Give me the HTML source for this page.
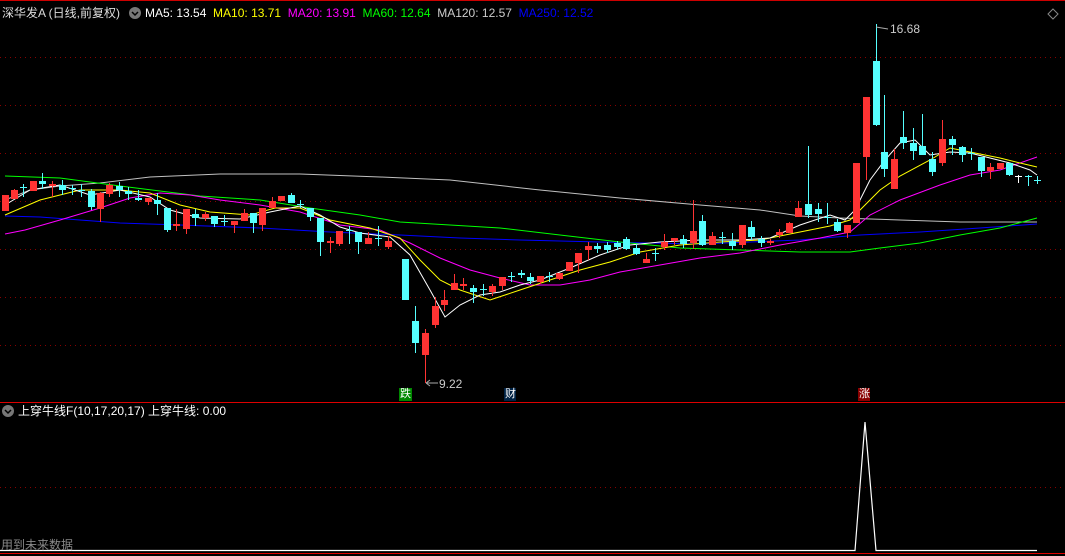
<!DOCTYPE html>
<html><head><meta charset="utf-8"><style>
body{margin:0;background:#000;width:1065px;height:556px;overflow:hidden;font-family:"Liberation Sans","Noto Sans CJK SC",sans-serif;}
svg{position:absolute;left:0;top:0}
.t{position:absolute;font-size:12px;white-space:nowrap;line-height:14px}
</style></head><body>
<svg id="s" width="1065" height="556" xmlns="http://www.w3.org/2000/svg">
<line x1="0" y1="0.5" x2="1065" y2="0.5" stroke="#c00"/>
<g stroke="#800" stroke-dasharray="1,4">
<line x1="0" y1="57.5" x2="1065" y2="57.5"/><line x1="0" y1="105.5" x2="1065" y2="105.5"/>
<line x1="0" y1="153.5" x2="1065" y2="153.5"/><line x1="0" y1="201.5" x2="1065" y2="201.5"/>
<line x1="0" y1="249.5" x2="1065" y2="249.5"/><line x1="0" y1="297.5" x2="1065" y2="297.5"/>
<line x1="0" y1="345.5" x2="1065" y2="345.5"/><line x1="0" y1="487.5" x2="1065" y2="487.5"/>
</g>
<line x1="0" y1="402.5" x2="1065" y2="402.5" stroke="#d00"/>
<line x1="0" y1="553.5" x2="1065" y2="553.5" stroke="#d00"/>
<polyline points="0,550.5 855,550.5 865,422 876,550.5 1037,550.5" fill="none" stroke="#fff" stroke-width="1.2"/>
<g id="ma" fill="none" stroke-width="1"></g>
<g id="c"></g>
<line x1="876.5" y1="24" x2="876.5" y2="61" stroke="#5ff"/>
<path d="M876 27 L888 29" stroke="#aaa"/>
<line x1="425.5" y1="355" x2="425.5" y2="383" stroke="#f33"/>
<path d="M426 383 L438 383 M426 383 L430 380 M426 383 L430 386" stroke="#aaa" fill="none"/>
<rect x="399" y="388" width="13" height="13" fill="#080"/>
<rect x="504" y="388" width="12" height="13" fill="#024"/>
<rect x="858" y="388" width="12" height="13" fill="#800"/>
<path d="M1053 9 L1058 14 L1053 19 L1048 14 Z" fill="none" stroke="#888"/>
<circle cx="135" cy="13" r="6" fill="#777"/><path d="M132 12 L135 15 L138 12" stroke="#000" fill="none" stroke-width="1.5"/>
<circle cx="8" cy="411" r="6" fill="#777"/><path d="M5 410 L8 413 L11 410" stroke="#000" fill="none" stroke-width="1.5"/>
</svg>
<div class="t" style="left:2px;top:6px;color:#ddd">深华发A (日线,前复权)</div>
<div class="t" style="left:145px;top:6px"><span style="color:#fff">MA5: 13.54</span>&nbsp; <span style="color:#ff0">MA10: 13.71</span>&nbsp; <span style="color:#f0f">MA20: 13.91</span>&nbsp; <span style="color:#0f0">MA60: 12.64</span>&nbsp; <span style="color:#ccc">MA120: 12.57</span>&nbsp; <span style="color:#00f">MA250: 12.52</span></div>
<div class="t" style="left:890px;top:22px;color:#ccc">16.68</div>
<div class="t" style="left:439px;top:377px;color:#ccc">9.22</div>
<div class="t" style="left:400px;top:387px;color:#fff;font-size:11px">跌</div>
<div class="t" style="left:505px;top:387px;color:#fff;font-size:11px">财</div>
<div class="t" style="left:859px;top:387px;color:#fff;font-size:11px">涨</div>
<div class="t" style="left:18px;top:404px;color:#fff">上穿牛线F(10,17,20,17) 上穿牛线: 0.00</div>
<div class="t" style="left:1px;top:538px;color:#888">用到未来数据</div>
<script>
var C=[[5,'r',195,211,195,211],[14,'r',190,199,189,199],[23,'x',187,187,184,197],[33,'r',181,191,181,191],[42,'c',181,184,173,189],[52,'r',184,186,181,197],[62,'c',185,190,180,195],[72,'x',188,188,185,195],[81,'x',190,190,184,197],[91,'c',191,207,189,210],[100,'r',193,209,192,222],[109,'r',185,194,183,197],[119,'c',186,190,182,197],[128,'c',191,194,187,200],[138,'c',198,200,190,201],[148,'r',198,202,198,205],[157,'c',200,204,193,215],[167,'c',208,230,208,232],[176,'r',224,226,209,231],[186,'r',209,229,209,234],[195,'c',214,218,209,226],[205,'r',214,218,212,221],[214,'c',216,224,216,227],[224,'x',221,221,215,226],[234,'r',221,225,221,233],[244,'r',213,221,209,221],[253,'c',213,223,213,233],[262,'r',208,225,208,231],[272,'r',201,208,197,208],[281,'r',196,201,196,201],[291,'c',195,203,193,203],[300,'x',204,204,200,208],[310,'c',208,217,208,221],[320,'c',218,242,218,256],[330,'r',241,243,237,253],[339,'r',231,244,231,246],[349,'x',230,230,226,244],[358,'c',232,242,232,254],[368,'r',238,244,232,244],[378,'x',238,238,226,246],[388,'r',241,247,236,249],[405,'c',259,300,259,300],[415,'c',321,343,306,353],[425,'r',333,355,329,383],[435,'r',306,325,297,328],[444,'r',300,305,290,311],[454,'r',283,290,274,290],[463,'r',284,286,278,290],[473,'c',288,292,285,303],[483,'x',289,289,284,296],[492,'r',286,292,284,296],[502,'r',277,286,277,290],[511,'x',276,276,272,282],[521,'c',273,275,270,278],[530,'c',277,281,273,284],[540,'r',276,282,276,284],[549,'x',276,276,272,282],[559,'r',273,279,273,280],[569,'r',262,271,262,271],[578,'r',253,263,253,273],[588,'r',246,250,242,260],[597,'c',246,249,243,253],[607,'c',245,250,242,253],[617,'c',243,247,241,250],[626,'c',239,249,237,250],[636,'c',248,254,244,255],[646,'r',259,263,253,263],[655,'x',253,253,248,261],[664,'r',242,247,234,250],[674,'r',238,241,238,245],[683,'c',239,244,235,248],[693,'r',231,243,200,249],[702,'c',221,245,215,246],[712,'r',236,245,232,245],[722,'x',237,237,232,244],[732,'c',241,246,233,250],[742,'r',225,245,225,248],[751,'c',227,237,221,240],[761,'c',239,243,236,247],[770,'r',241,243,239,245],[779,'r',232,235,229,238],[789,'r',223,233,222,233],[798,'r',208,217,201,217],[808,'c',204,215,146,218],[818,'c',209,214,203,222],[827,'x',217,217,203,224],[837,'c',222,231,219,232],[847,'r',225,233,225,238],[856,'r',163,223,163,223],[866,'r',97,157,97,180],[876,'c',61,125,61,126],[884,'c',152,169,95,177],[894,'r',159,189,149,189],[903,'c',137,143,111,149],[913,'c',143,151,128,160],[922,'c',146,155,114,155],[932,'c',159,172,152,176],[942,'r',139,163,120,166],[952,'c',139,145,136,155],[962,'c',147,155,146,162],[971,'x',153,153,148,160],[981,'c',157,171,157,177],[990,'r',167,171,163,179],[1000,'r',163,169,163,169],[1009,'c',163,175,163,176],[1018,'w',176,176,175,183],[1028,'x',176,176,175,186],[1037,'x',180,180,176,184]];
var col={r:'#f33',c:'#5ff',x:'#5ff',w:'#fff'},h='';
C.forEach(function(d){var x=d[0],k=col[d[1]];
h+='<line x1="'+(x+.5)+'" y1="'+d[4]+'" x2="'+(x+.5)+'" y2="'+d[5]+'" stroke="'+k+'"/>';
if(d[1]=='x'||d[1]=='w')h+='<line x1="'+(x-3)+'" y1="'+(d[2]+.5)+'" x2="'+(x+4)+'" y2="'+(d[2]+.5)+'" stroke="'+k+'"/>';
else h+='<rect x="'+(x-3)+'" y="'+d[2]+'" width="7" height="'+Math.max(2,d[3]-d[2])+'" fill="'+k+'"/>';});
document.getElementById('c').innerHTML=h;
var M={'#c0c0c0':'5,200 30,190 60,186 100,183 150,177 220,174 300,174 380,177 450,180 540,190 620,198 700,205 760,210 800,216 840,218 900,220 960,222 1037,222',
'#00f':'5,216 40,217 80,220 120,223 180,225 260,228 330,232 400,235 460,238 520,240 600,242 700,244 800,240 860,235 920,232 980,228 1037,224',
'#0f0':'5,176 60,178 120,186 200,196 260,200 310,208 360,215 400,222 450,225 500,228 560,235 620,242 680,248 740,250 800,252 850,252 880,248 920,243 960,235 1000,228 1037,218',
'#f0f':'5,234 25,230 60,220 100,208 130,198 160,193 190,195 220,200 260,205 300,212 340,225 380,230 410,243 440,258 470,270 500,278 530,285 560,285 590,280 620,272 660,265 700,258 740,253 780,245 820,238 850,232 870,215 900,200 940,185 970,175 1000,170 1037,157',
'#ff0':'5,215 40,200 80,190 120,190 150,193 180,205 210,212 250,215 275,208 300,208 330,220 370,228 400,238 420,260 440,280 460,290 490,300 520,290 550,280 580,270 610,262 640,252 680,245 720,242 760,240 800,232 830,226 850,220 870,200 880,190 900,176 930,160 950,148 970,152 1000,158 1020,163 1037,167',
'#fff':'5,205 30,190 60,185 90,195 120,190 150,197 170,210 200,218 240,219 270,212 300,206 320,215 340,227 360,233 390,237 410,255 430,290 445,317 460,305 480,295 500,292 520,285 540,280 570,268 600,255 630,245 660,242 700,240 740,240 770,238 800,225 830,215 845,220 855,210 870,180 885,160 900,143 915,140 930,155 950,152 970,153 990,158 1010,163 1030,170 1037,175'};
var m='';for(var k in M)m+='<polyline points="'+M[k]+'" stroke="'+k+'"/>';
document.getElementById('ma').innerHTML=m;
</script>
</body></html>
